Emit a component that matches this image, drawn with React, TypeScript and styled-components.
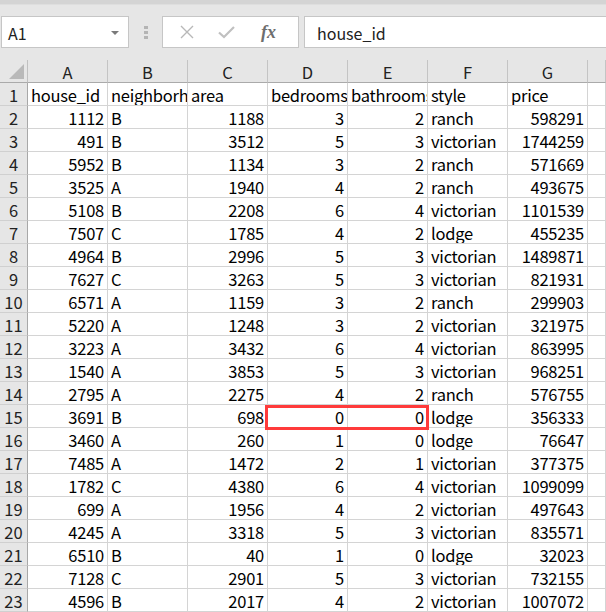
import React from "react";
import styled, { createGlobalStyle } from "styled-components";

const GlobalStyle = createGlobalStyle`
  html, body {
    margin: 0;
    padding: 0;
    background: #e6e6e6;
    overflow: hidden;
  }
  body {
    font-family: "Noto Sans CJK SC", "Liberation Sans", sans-serif;
    color: #000;
  }
`;

const Window = styled.div`
  width: 606px;
  height: 612px;
  display: flex;
  flex-direction: column;
  overflow: hidden;
`;

const TopStrip = styled.div`
  height: 4px;
  background: #d4d4d4;
  border-bottom: 1px solid #dedede;
`;

const FormulaBar = styled.div`
  display: flex;
  align-items: center;
  height: 32px;
  margin-top: 11px;
  padding-left: 1px;
`;

const Box = styled.div`
  height: 32px;
  box-sizing: border-box;
  background: #fff;
  border: 1px solid #c6c6c6;
  display: flex;
  align-items: center;
`;

const NameBox = styled(Box)`
  width: 128px;
  padding: 2px 9px 0 6px;
  justify-content: space-between;
  font-size: 16px;
  color: #222;
`;

const Caret = styled.span`
  width: 0;
  height: 0;
  border-left: 4px solid transparent;
  border-right: 4px solid transparent;
  border-top: 4px solid #7a7a7a;
`;

const Grip = styled.div`
  width: 4px;
  margin: 0 14px 0 15px;
  display: flex;
  flex-direction: column;
  gap: 2px;
  span {
    height: 3px;
    background: #b4b4b4;
  }
`;

const ActionBox = styled(Box)`
  width: 137px;
  padding-left: 17px;
  gap: 24px;
`;

const Fx = styled.span`
  font-family: "Liberation Serif", serif;
  font-style: italic;
  font-weight: bold;
  font-size: 18px;
  color: #6e6e6e;
  margin-left: 2px;
`;

const InputBox = styled(Box)`
  flex: 1;
  margin-left: 5px;
  border-right: none;
  padding: 2px 0 0 12px;
  font-size: 16px;
  color: #222;
`;

const Sheet = styled.div`
  position: relative;
  margin-top: 12px;
  display: grid;
  grid-template-columns: 28px repeat(7, 80px) 1fr;
  grid-auto-rows: 23px;
  background: #fff;
`;

const Corner = styled.div`
  background: #e6e6e6;
  border-right: 1px solid #c0c0c0;
  border-bottom: 1px solid #aaa;
  box-sizing: border-box;
  position: relative;
  &::after {
    content: "";
    position: absolute;
    right: 3px;
    bottom: 3px;
    width: 0;
    height: 0;
    border-left: 15px solid transparent;
    border-bottom: 15px solid #b9b9b9;
  }
`;

const HeadBase = styled.div`
  background: #e6e6e6;
  box-sizing: border-box;
  text-align: center;
  font-size: 16.5px;
  line-height: 20px;
  padding-top: 2px;
  color: #222;
`;

const ColHead = styled(HeadBase)`
  border-right: 1px solid #c4c4c4;
  border-bottom: 1px solid #aaa;
`;

const RowHead = styled(HeadBase)`
  border-right: 1px solid #a8a8a8;
  border-bottom: 1px solid #d0d0d0;
`;

const Cell = styled.div<{ $num?: boolean }>`
  border-right: 1px solid #d4d4d4;
  border-bottom: 1px solid #d4d4d4;
  box-sizing: border-box;
  font-size: 16.5px;
  letter-spacing: -0.25px;
  line-height: 20px;
  padding-top: 2px;
  white-space: nowrap;
  overflow: hidden;
  padding-left: ${(p) => (p.$num ? "0" : "3px")};
  padding-right: ${(p) => (p.$num ? "3px" : "0")};
  text-align: ${(p) => (p.$num ? "right" : "left")};
`;

const Highlight = styled.div`
  position: absolute;
  left: 265px;
  top: 345px;
  width: 164px;
  height: 25px;
  box-sizing: border-box;
  border: 3px solid #ff3b3b;
  pointer-events: none;
`;

const XIcon = () => (
  <svg width="14" height="14" viewBox="0 0 14 14">
    <path d="M1 1 L13 13 M13 1 L1 13" stroke="#b8b8b8" strokeWidth="1.4" fill="none" />
  </svg>
);

const CheckIcon = () => (
  <svg width="17" height="14" viewBox="0 0 17 14">
    <path d="M1 7.5 L6 12 L16 2" stroke="#c0c0c0" strokeWidth="2.2" fill="none" />
  </svg>
);

const headers = ["house_id", "neighborhood", "area", "bedrooms", "bathrooms", "style", "price"];

const rows: [number, string, number, number, number, string, number][] = [
  [1112, "B", 1188, 3, 2, "ranch", 598291],
  [491, "B", 3512, 5, 3, "victorian", 1744259],
  [5952, "B", 1134, 3, 2, "ranch", 571669],
  [3525, "A", 1940, 4, 2, "ranch", 493675],
  [5108, "B", 2208, 6, 4, "victorian", 1101539],
  [7507, "C", 1785, 4, 2, "lodge", 455235],
  [4964, "B", 2996, 5, 3, "victorian", 1489871],
  [7627, "C", 3263, 5, 3, "victorian", 821931],
  [6571, "A", 1159, 3, 2, "ranch", 299903],
  [5220, "A", 1248, 3, 2, "victorian", 321975],
  [3223, "A", 3432, 6, 4, "victorian", 863995],
  [1540, "A", 3853, 5, 3, "victorian", 968251],
  [2795, "A", 2275, 4, 2, "ranch", 576755],
  [3691, "B", 698, 0, 0, "lodge", 356333],
  [3460, "A", 260, 1, 0, "lodge", 76647],
  [7485, "A", 1472, 2, 1, "victorian", 377375],
  [1782, "C", 4380, 6, 4, "victorian", 1099099],
  [699, "A", 1956, 4, 2, "victorian", 497643],
  [4245, "A", 3318, 5, 3, "victorian", 835571],
  [6510, "B", 40, 1, 0, "lodge", 32023],
  [7128, "C", 2901, 5, 3, "victorian", 732155],
  [4596, "B", 2017, 4, 2, "victorian", 1007072],
];

const letters = ["A", "B", "C", "D", "E", "F", "G", ""];

export default function App() {
  return (
    <Window>
      <GlobalStyle />
      <TopStrip />
      <FormulaBar>
        <NameBox>
          <span>A1</span>
          <Caret />
        </NameBox>
        <Grip>
          <span />
          <span />
          <span />
        </Grip>
        <ActionBox>
          <XIcon />
          <CheckIcon />
          <Fx>fx</Fx>
        </ActionBox>
        <InputBox>house_id</InputBox>
      </FormulaBar>
      <Sheet>
        <Corner />
        {letters.map((l, i) => (
          <ColHead key={i}>{l}</ColHead>
        ))}
        <RowHead>1</RowHead>
        {headers.map((h) => (
          <Cell key={h}>{h}</Cell>
        ))}
        <Cell />
        {rows.map((r, i) => (
          <React.Fragment key={i}>
            <RowHead>{i + 2}</RowHead>
            {r.map((v, j) => (
              <Cell key={j} $num={typeof v === "number"}>
                {v}
              </Cell>
            ))}
            <Cell />
          </React.Fragment>
        ))}
        <Highlight />
      </Sheet>
    </Window>
  );
}
